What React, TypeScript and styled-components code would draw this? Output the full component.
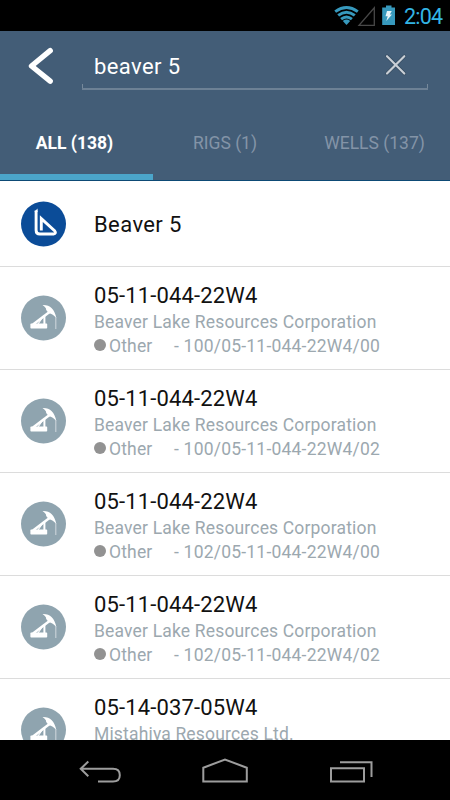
import React from "react";
import styled, { createGlobalStyle } from "styled-components";

const GlobalStyle = createGlobalStyle`
  * { box-sizing: border-box; }
  body { margin: 0; background: #000; font-family: Roboto, sans-serif; }
`;

const Screen = styled.div`
  width: 450px;
  height: 800px;
  display: flex;
  flex-direction: column;
  overflow: hidden;
  background: #fff;
`;

const StatusBar = styled.div`
  height: 31px;
  flex: none;
  display: flex;
  background: #000;
  padding-left: 332px;
`;

const Clock = styled.span`
  margin-left: 4px;
  color: #33b5e5;
  font-size: 21.5px;
  line-height: 33px;
  letter-spacing: -0.8px;
`;

const Header = styled.header`
  height: 150px;
  flex: none;
  background: #435d77;
  border-bottom: 1px solid #0d4a75;
  display: flex;
  flex-direction: column;
`;

const SearchRow = styled.div`
  height: 75px;
  display: flex;
`;

const BackButton = styled.button`
  width: 82px;
  height: 75px;
  padding: 0;
  border: 0;
  background: none;
  display: block;
`;

const SearchField = styled.div`
  width: 346px;
  height: 59px;
  padding-left: 12px;
  display: flex;
  justify-content: space-between;
  background:
    linear-gradient(#6d8195, #6d8195) left bottom / 100% 2px no-repeat,
    linear-gradient(#76899b, #76899b) left bottom / 1px 6px no-repeat,
    linear-gradient(#76899b, #76899b) right bottom / 1px 6px no-repeat;
`;

const Query = styled.span`
  color: #fff;
  font-size: 22px;
  line-height: 26px;
  padding-top: 23px;
  letter-spacing: 0.4px;
`;

const Tabs = styled.nav`
  height: 74px;
  display: grid;
  grid-template-columns: 153px 144px 153px;
`;

const Tab = styled.div<{ $active?: boolean }>`
  display: flex;
  justify-content: center;
  padding: 27px ${(p) => (p.$active ? 4 : 0)}px 0 0;
  font-size: 17.5px;
  line-height: 20px;
  white-space: nowrap;
  font-weight: ${(p) => (p.$active ? 700 : 400)};
  color: ${(p) => (p.$active ? "#fff" : "#8394a7")};
  border-bottom: 6px solid ${(p) => (p.$active ? "#4ba5ca" : "transparent")};
`;

const LastTab = styled(Tab)`
  padding-left: 2px;
`;

const List = styled.main`
  height: 559px;
  flex: none;
  overflow: hidden;
`;

const Row = styled.div<{ $height: number }>`
  height: ${(p) => p.$height}px;
  display: flex;
  align-items: center;
  border-bottom: 1px solid #dcdcdc;
`;

const IconCell = styled.div`
  width: 94px;
  flex: none;
  padding-left: 21px;
  svg { display: block; }
`;

const Details = styled.div`
  padding-top: 4px;
  display: flex;
  flex-direction: column;
  white-space: nowrap;
`;

const Title = styled.div`
  color: #111;
  font-size: 22px;
  line-height: 28px;
  letter-spacing: 0.15px;
`;

const RigName = styled(Title)`
  padding-top: 2px;
  letter-spacing: 0.4px;
`;

const Company = styled.div`
  height: 24px;
  color: #9ca8af;
  font-size: 17.5px;
  line-height: 24px;
  letter-spacing: 0.17px;
`;

const Meta = styled(Company)`
  display: flex;
  align-items: center;
`;

const Dot = styled.i`
  width: 12px;
  height: 12px;
  margin: -2px 3px 0 0;
  border-radius: 50%;
  background: #929292;
`;

const Status = styled.span`
  width: 65px;
`;

const Uwi = styled.span`
  letter-spacing: 0.21px;
`;

const NavBar = styled.footer`
  height: 60px;
  flex: none;
  background: #000;
  svg { display: block; }
`;

const StatusIcons = () => (
  <svg width="68" height="31" viewBox="332 0 68 31">
    <g fill="none" stroke="#3799bd" strokeWidth="3">
      <path d="M335.2 11.6Q346.5 3.5 357.8 11.6" />
      <path d="M338.2 15.4Q346.5 9 354.8 15.4" />
      <path d="M341.1 19.1Q346.5 14.8 351.9 19.1" />
    </g>
    <path d="M342.8 20.9Q346.5 18 350.2 20.9L346.5 25Z" fill="#3799bd" />
    <path d="M359 25.3H374.3V7.8Z" fill="none" stroke="#484848" strokeWidth="1.3" />
    <path d="M382.2 7.5H386V5.4H391.5V7.5H395V25H382.2Z" fill="#3799bd" />
    <path d="M387 11H391.8L389.8 14.4H392L386.3 21L387.7 16.3H385.5Z" fill="#e8f5fa" />
  </svg>
);

const RigIcon = () => (
  <svg width="45" height="46" viewBox="0 0 45 46">
    <circle cx="22.5" cy="23" r="22.5" fill="#0b4c98" />
    <path d="M15.1 9.5V29.2Q15.1 33 18.8 33H32.4Q35.6 32.4 33.8 30L20.3 17.6V29.6" fill="none" stroke="#fff" strokeWidth="2.9" />
    <path d="M13.65 10.4L16.55 7.5V11H13.65Z" fill="#fff" />
  </svg>
);

const WellIcon = () => (
  <svg width="45" height="46" viewBox="0 0 45 46">
    <circle cx="22.5" cy="23" r="22.5" fill="#8fa4af" />
    <path d="M21.5 10.1Q32.5 9.5 35.3 23Q32 18.8 27.8 18.2L25.2 15Q25.2 12.4 21.5 10.1Z" fill="#fff" />
    <path d="M12 29.5L29.5 16.2" stroke="#fff" strokeWidth="2.5" />
    <path d="M23.4 20.5V29.5" stroke="#fff" strokeWidth="2" />
    <path d="M21.5 22.5L17 29" stroke="#fff" strokeWidth="1.2" />
    <rect x="9.4" y="28.6" width="16.8" height="5" rx="0.8" fill="#fff" />
    <path d="M34.8 22V34" stroke="#cbd5da" strokeWidth="1.1" />
  </svg>
);

const wells = [
  { id: 1, title: "05-11-044-22W4", company: "Beaver Lake Resources Corporation", uwi: "100/05-11-044-22W4/00" },
  { id: 2, title: "05-11-044-22W4", company: "Beaver Lake Resources Corporation", uwi: "100/05-11-044-22W4/02" },
  { id: 3, title: "05-11-044-22W4", company: "Beaver Lake Resources Corporation", uwi: "102/05-11-044-22W4/00" },
  { id: 4, title: "05-11-044-22W4", company: "Beaver Lake Resources Corporation", uwi: "102/05-11-044-22W4/02" },
  { id: 5, title: "05-14-037-05W4", company: "Mistahiya Resources Ltd.", uwi: "" },
];

export default function App() {
  return (
    <Screen>
      <GlobalStyle />
      <StatusBar>
        <StatusIcons />
        <Clock>2:04</Clock>
      </StatusBar>
      <Header>
        <SearchRow>
          <BackButton aria-label="Back">
            <svg width="82" height="75" viewBox="0 31 82 75">
              <path d="M50.2 50.7L31.5 66L50.2 81.2" fill="none" stroke="#fff" strokeWidth="5.4" strokeLinecap="round" strokeLinejoin="round" />
            </svg>
          </BackButton>
          <SearchField>
            <Query>beaver 5</Query>
            <svg width="46" height="57" viewBox="382 31 46 57">
              <path d="M387 56.2L404.3 73.5M404.3 56.2L387 73.5" stroke="#34495d" strokeWidth="3.4" strokeLinecap="round" />
              <path d="M387 56.2L404.3 73.5M404.3 56.2L387 73.5" stroke="#c9cfd6" strokeWidth="2.2" strokeLinecap="round" />
            </svg>
          </SearchField>
        </SearchRow>
        <Tabs>
          <Tab $active>ALL (138)</Tab>
          <Tab>RIGS (1)</Tab>
          <LastTab>WELLS (137)</LastTab>
        </Tabs>
      </Header>
      <List>
        <Row $height={86}>
          <IconCell><RigIcon /></IconCell>
          <RigName>Beaver 5</RigName>
        </Row>
        {wells.map((w) => (
          <Row key={w.id} $height={103}>
            <IconCell><WellIcon /></IconCell>
            <Details>
              <Title>{w.title}</Title>
              <Company>{w.company}</Company>
              <Meta>
                {w.uwi && (
                  <>
                    <Dot />
                    <Status>Other</Status>
                    <Uwi>- {w.uwi}</Uwi>
                  </>
                )}
              </Meta>
            </Details>
          </Row>
        ))}
      </List>
      <NavBar>
        <svg width="450" height="60" viewBox="0 740 450 60" fill="none" stroke="#9d9d9d" strokeWidth="2">
          <path d="M98 781.5H113Q119.8 781.5 119.8 775.2Q119.8 768.8 113 768.8H81M88.3 761.5L80.7 768.8L88.3 776.2" />
          <path d="M203.3 781.6V767.7L225 759.5L246.8 767.7V781.6Z" />
          <path d="M331 768.3H364V781.5H331ZM340 762.2H371.5V777" />
        </svg>
      </NavBar>
    </Screen>
  );
}
